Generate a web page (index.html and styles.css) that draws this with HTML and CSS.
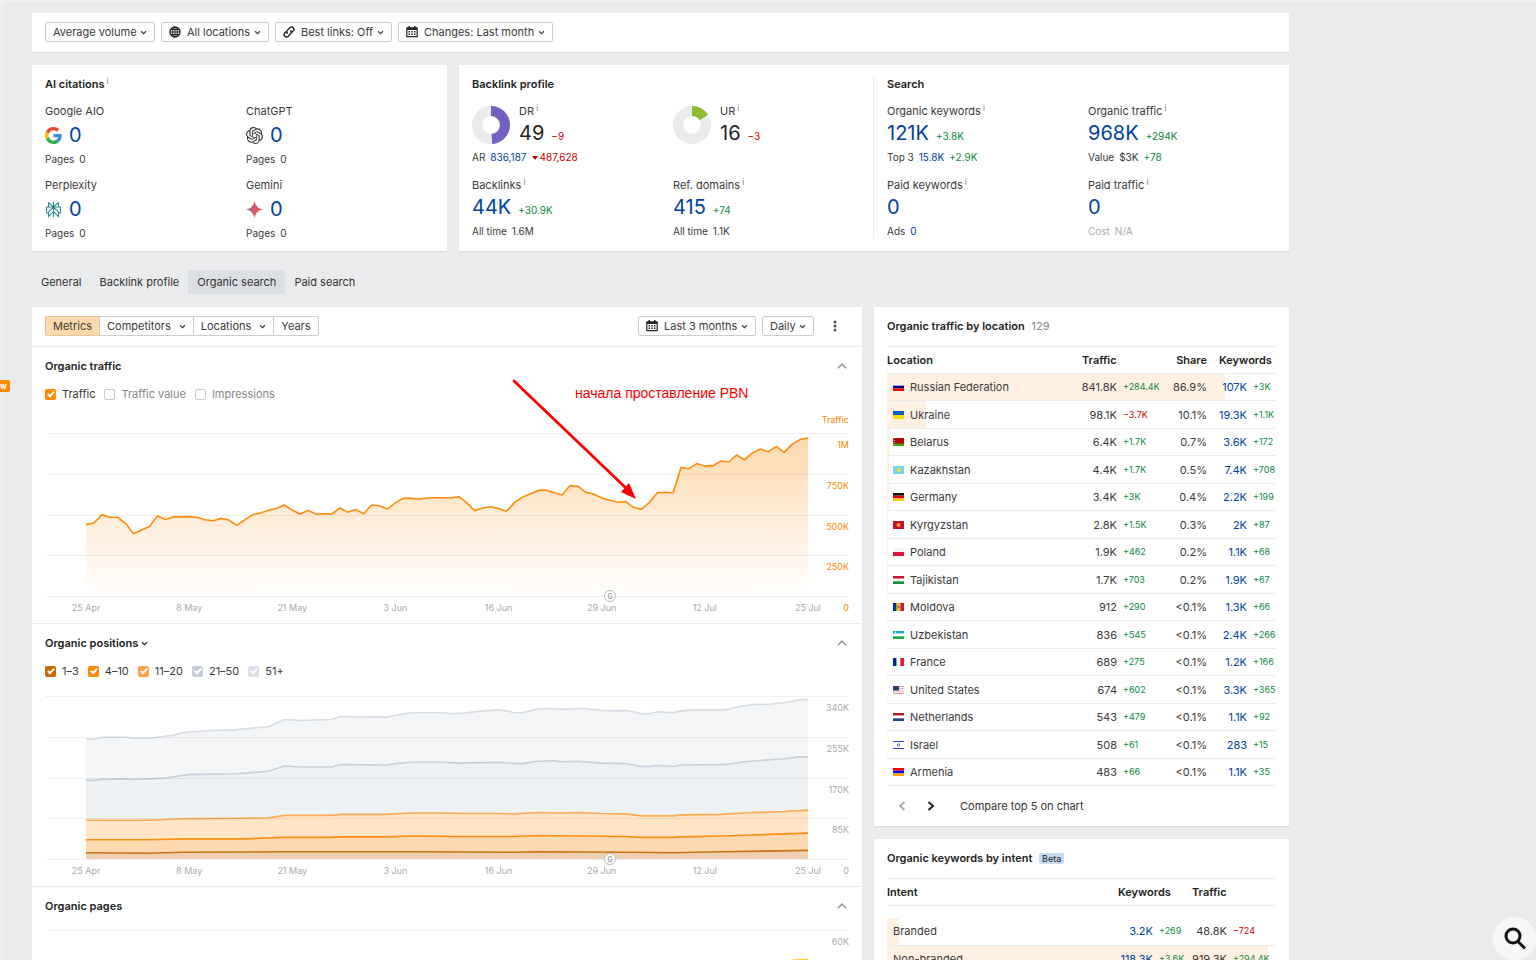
FILE: index.html
```html
<!DOCTYPE html>
<html lang="en">
<head>
    <meta charset="UTF-8">
    <meta name="viewport" content="width=device-width, initial-scale=1.0">
    <title>Site overview</title>
    <link rel="stylesheet" href="styles.css">
</head>
<body>

    <!-- Shared icons -->
    <svg class="sprite" aria-hidden="true">
        <symbol id="chevron" viewBox="0 0 8 8"><path d="M1.2 2.600 4 5.400l2.800-2.800" fill="none" stroke="currentColor" stroke-width="1.300"/></symbol>
        <symbol id="collapse" viewBox="0 0 10 6"><path d="M.8 5.3 5 1.2l4.200 4.100" fill="none" stroke="currentColor" stroke-width="1.6"/></symbol>
        <symbol id="calendar" viewBox="0 0 12 12">
            <path fill="currentColor" fill-rule="evenodd" d="M2.500 0h1.500v1.300h4V0h1.500v1.300H11c.5 0 .8.300.8.800v8.400c0 .5-.300.800-.8.800H1c-.5 0-.8-.300-.8-.8V2.100c0-.5.300-.8.8-.8h1.500zM1.400 4v6.100h9.200V4z"/>
            <path fill="currentColor" d="M2.500 5H4v1.500H2.500zM5.200 5h1.500v1.500H5.200zM8 5h1.500v1.500H8zM2.500 7.600H4v1.500H2.500zM5.200 7.600h1.500v1.500H5.200zM8 7.600h1.500v1.500H8z"/>
        </symbol>
    </svg>

    <span class="new-badge">w</span>

    <div class="page">

        <!-- Filters -->
        <div class="card filters">
            <label class="picker">
                <select aria-label="Volume"><option>Average volume</option></select>
                <svg class="chevron"><use href="#chevron"/></svg>
            </label>
            <label class="picker">
                <svg class="icon" viewBox="0 0 12 12" fill="none" stroke="currentColor"><circle cx="6" cy="6" r="5" stroke-width="1.4"/><ellipse cx="6" cy="6" rx="2.300" ry="5"/><path d="M6 1v10M1 6h10M1.800 3.500h8.400M1.800 8.500h8.400"/></svg>
                <select aria-label="Location"><option>All locations</option></select>
                <svg class="chevron"><use href="#chevron"/></svg>
            </label>
            <label class="picker">
                <svg class="icon" viewBox="0 0 12 12" fill="none" stroke="currentColor" stroke-width="1.400" stroke-linecap="round"><path d="M4.300 7.300C3.300 6 3.700 5 4.500 4.200l2.300-2.400c1-1 2.500-1 3.400-.1s.9 2.300 0 3.300L9 6.200"/><path d="M7.700 4.700c1 1.300.6 2.300-.2 3.100l-2.300 2.400c-1 1-2.500 1-3.400.1s-.9-2.300 0-3.300L3 5.800"/></svg>
                <select aria-label="Best links"><option>Best links: Off</option></select>
                <svg class="chevron"><use href="#chevron"/></svg>
            </label>
            <label class="picker">
                <svg class="icon"><use href="#calendar"/></svg>
                <select aria-label="Changes"><option>Changes: Last month</option></select>
                <svg class="chevron"><use href="#chevron"/></svg>
            </label>
        </div>

        <!-- Overview cards -->
        <div class="overview">
            <section class="card panel">
                <h2>AI citations <sup>i</sup></h2>
                <div class="metrics ai">
                    <div class="metric">
                        <div class="label">Google AIO</div>
                        <div class="value">
                            <svg class="logo" viewBox="0 0 48 48"><path fill="#ea4335" d="M24 9.500c3.540 0 6.710 1.220 9.210 3.600l6.850-6.850C35.900 2.380 30.470 0 24 0 14.620 0 6.510 5.380 2.560 13.220l7.980 6.190C12.430 13.720 17.740 9.500 24 9.500z"/><path fill="#4285f4" d="M46.980 24.550c0-1.570-.15-3.090-.38-4.550H24v9.020h12.940c-.58 2.960-2.260 5.480-4.780 7.180l7.730 6c4.510-4.180 7.090-10.360 7.090-17.650z"/><path fill="#fbbc05" d="M10.530 28.590c-.48-1.450-.76-2.990-.76-4.590s.27-3.140.76-4.590l-7.980-6.190C.92 16.460 0 20.120 0 24c0 3.880.92 7.540 2.560 10.780l7.970-6.190z"/><path fill="#34a853" d="M24 48c6.480 0 11.930-2.130 15.890-5.810l-7.730-6c-2.150 1.450-4.920 2.300-8.160 2.300-6.260 0-11.570-4.220-13.470-9.910l-7.980 6.190C6.510 42.620 14.620 48 24 48z"/></svg>
                            <a href="#">0</a>
                        </div>
                        <div class="sub">Pages <span>0</span></div>
                    </div>
                    <div class="metric">
                        <div class="label">ChatGPT</div>
                        <div class="value">
                            <svg class="logo" viewBox="0 0 24 24"><path fill="#333" d="M22.2819 9.8211a5.9847 5.9847 0 0 0-.5157-4.9108 6.0462 6.0462 0 0 0-6.5098-2.9A6.0651 6.0651 0 0 0 4.9807 4.1818a5.9847 5.9847 0 0 0-3.9977 2.9 6.0462 6.0462 0 0 0 .7427 7.0966 5.98 5.98 0 0 0 .511 4.9107 6.051 6.051 0 0 0 6.5146 2.9001A5.9847 5.9847 0 0 0 13.2599 24a6.0557 6.0557 0 0 0 5.7718-4.2058 5.9894 5.9894 0 0 0 3.9977-2.9001 6.0557 6.0557 0 0 0-.7475-7.0729zm-9.022 12.6081a4.4755 4.4755 0 0 1-2.8764-1.0408l.1419-.0804 4.7783-2.7582a.7948.7948 0 0 0 .3927-.6813v-6.7369l2.02 1.1686a.071.071 0 0 1 .038.052v5.5826a4.504 4.504 0 0 1-4.4945 4.4944zm-9.6607-4.1254a4.4708 4.4708 0 0 1-.5346-3.0137l.142.0852 4.783 2.7582a.7712.7712 0 0 0 .7806 0l5.8428-3.3685v2.3324a.0804.0804 0 0 1-.0332.0615L9.74 19.9502a4.4992 4.4992 0 0 1-6.1408-1.6464zM2.3408 7.8956a4.485 4.485 0 0 1 2.3655-1.9728V11.6a.7664.7664 0 0 0 .3879.6765l5.8144 3.3543-2.0201 1.1685a.0757.0757 0 0 1-.071 0l-4.8303-2.7865A4.504 4.504 0 0 1 2.3408 7.872zm16.5963 3.8558L13.1038 8.364 15.1192 7.2a.0757.0757 0 0 1 .071 0l4.8303 2.7913a4.4944 4.4944 0 0 1-.6765 8.1042v-5.6772a.79.79 0 0 0-.407-.667zm2.0107-3.0231l-.142-.0852-4.7735-2.7818a.7759.7759 0 0 0-.7854 0L9.409 9.2297V6.8974a.0662.0662 0 0 1 .0284-.0615l4.8303-2.7866a4.4992 4.4992 0 0 1 6.6802 4.66zM8.3065 12.863l-2.02-1.1638a.0804.0804 0 0 1-.038-.0567V6.0742a4.4992 4.4992 0 0 1 7.3757-3.4537l-.142.0805L8.704 5.459a.7948.7948 0 0 0-.3927.6813zm1.0976-2.3654l2.602-1.4998 2.6069 1.4998v2.9994l-2.5974 1.4997-2.6067-1.4997Z"/></svg>
                            <a href="#">0</a>
                        </div>
                        <div class="sub">Pages <span>0</span></div>
                    </div>
                    <div class="metric">
                        <div class="label">Perplexity</div>
                        <div class="value">
                            <svg class="logo" viewBox="0 0 24 24" fill="none" stroke="#2a8790" stroke-width="1.500"><path d="M12 1v22M5 2l7 6.500V15l-7 7v-6.500l7-7M19 2l-7 6.500V15l7 7v-6.500l-7-7M5 2v6.500M19 2v6.500M5 17H2.200V8.500h19.600V17H19"/></svg>
                            <a href="#">0</a>
                        </div>
                        <div class="sub">Pages <span>0</span></div>
                    </div>
                    <div class="metric">
                        <div class="label">Gemini</div>
                        <div class="value">
                            <svg class="logo" viewBox="0 0 24 24"><defs><linearGradient id="gem"><stop offset="0" stop-color="#8f6fc4"/><stop offset=".5" stop-color="#d85a66"/><stop offset="1" stop-color="#e0694f"/></linearGradient></defs><path fill="url(#gem)" d="M12 0c1.500 7 5 10.500 12 12-7 1.500-10.500 5-12 12-1.500-7-5-10.500-12-12C7 10.500 10.500 7 12 0z"/></svg>
                            <a href="#">0</a>
                        </div>
                        <div class="sub">Pages <span>0</span></div>
                    </div>
                </div>
            </section>

            <div class="card split">
                <section class="panel">
                    <h2>Backlink profile</h2>
                    <div class="metrics">
                        <div class="metric">
                            <div class="rating">
                                <svg class="donut" viewBox="0 0 38 38"><circle cx="19" cy="19" r="14"/><circle class="arc dr" cx="19" cy="19" r="14" pathLength="100" stroke-dasharray="49 100"/></svg>
                                <div>
                                    <div class="label">DR <sup>i</sup></div>
                                    <div class="value dark">49 <span class="delta down">−9</span></div>
                                </div>
                            </div>
                            <div class="sub">AR <a href="#">836,187</a> <span class="down rank">487,628</span></div>
                        </div>
                        <div class="metric">
                            <div class="rating">
                                <svg class="donut" viewBox="0 0 38 38"><circle cx="19" cy="19" r="14"/><circle class="arc ur" cx="19" cy="19" r="14" pathLength="100" stroke-dasharray="16 100"/></svg>
                                <div>
                                    <div class="label">UR <sup>i</sup></div>
                                    <div class="value dark">16 <span class="delta down">−3</span></div>
                                </div>
                            </div>
                        </div>
                        <div class="metric">
                            <div class="label">Backlinks <sup>i</sup></div>
                            <div class="value"><a href="#">44K</a> <span class="delta">+30.9K</span></div>
                            <div class="sub">All time <span>1.6M</span></div>
                        </div>
                        <div class="metric">
                            <div class="label">Ref. domains <sup>i</sup></div>
                            <div class="value"><a href="#">415</a> <span class="delta">+74</span></div>
                            <div class="sub">All time <span>1.1K</span></div>
                        </div>
                    </div>
                </section>
                <section class="panel">
                    <h2>Search</h2>
                    <div class="metrics">
                        <div class="metric">
                            <div class="label">Organic keywords <sup>i</sup></div>
                            <div class="value"><a href="#">121K</a> <span class="delta">+3.8K</span></div>
                            <div class="sub">Top 3 <a href="#">15.8K</a> <span class="delta">+2.9K</span></div>
                        </div>
                        <div class="metric">
                            <div class="label">Organic traffic <sup>i</sup></div>
                            <div class="value"><a href="#">968K</a> <span class="delta">+294K</span></div>
                            <div class="sub">Value <span>$3K</span> <span class="delta">+78</span></div>
                        </div>
                        <div class="metric">
                            <div class="label">Paid keywords <sup>i</sup></div>
                            <div class="value"><a href="#">0</a></div>
                            <div class="sub">Ads <a href="#">0</a></div>
                        </div>
                        <div class="metric">
                            <div class="label">Paid traffic <sup>i</sup></div>
                            <div class="value"><a href="#">0</a></div>
                            <div class="sub muted">Cost <span>N/A</span></div>
                        </div>
                    </div>
                </section>
            </div>
        </div>

        <nav class="tabs">
            <a href="#">General</a>
            <a href="#">Backlink profile</a>
            <a href="#" class="active">Organic search</a>
            <a href="#">Paid search</a>
        </nav>

        <div class="content">
            <!-- Charts -->
            <div class="card charts">
                <div class="toolbar">
                    <div class="segments">
                        <button class="active">Metrics</button>
                        <button>Competitors <svg class="chevron"><use href="#chevron"/></svg></button>
                        <button>Locations <svg class="chevron"><use href="#chevron"/></svg></button>
                        <button>Years</button>
                    </div>
                    <div class="range">
                        <label class="picker">
                            <svg class="icon"><use href="#calendar"/></svg>
                            <select aria-label="Period"><option>Last 3 months</option></select>
                            <svg class="chevron"><use href="#chevron"/></svg>
                        </label>
                        <label class="picker">
                            <select aria-label="Interval"><option>Daily</option></select>
                            <svg class="chevron"><use href="#chevron"/></svg>
                        </label>
                        <button class="kebab" aria-label="More"><svg viewBox="0 0 4 12"><circle cx="2" cy="2" r="1.500"/><circle cx="2" cy="6" r="1.500"/><circle cx="2" cy="10" r="1.500"/></svg></button>
                    </div>
                </div>

                <section class="chart">
                    <div class="chart-head">
                        <h2>Organic traffic</h2>
                        <button class="collapse" aria-label="Collapse"><svg><use href="#collapse"/></svg></button>
                    </div>
                    <div class="legend">
                        <label><input type="checkbox" checked> Traffic</label>
                        <label class="off"><input type="checkbox"> Traffic value</label>
                        <label class="off"><input type="checkbox"> Impressions</label>
                    </div>
                    <svg id="trafficChart" class="plot orange" viewBox="0 0 804 203"></svg>
                    <svg class="note-arrow" viewBox="0 0 126 122"><path d="M2 2 115 110" stroke="#f00" stroke-width="2.800" stroke-linecap="round"/><path d="M124 120 109 113l8-9z" fill="#f00"/></svg>
                    <span class="note-text" lang="ru">начала проставление PBN</span>
                </section>

                <section class="chart">
                    <div class="chart-head">
                        <h2><button class="heading-button">Organic positions <svg class="chevron"><use href="#chevron"/></svg></button></h2>
                        <button class="collapse" aria-label="Collapse"><svg><use href="#collapse"/></svg></button>
                    </div>
                    <div class="legend">
                        <label><input type="checkbox" class="p1" checked> 1–3</label>
                        <label><input type="checkbox" class="p2" checked> 4–10</label>
                        <label><input type="checkbox" class="p3" checked> 11–20</label>
                        <label><input type="checkbox" class="p4" checked> 21–50</label>
                        <label><input type="checkbox" class="p5" checked> 51+</label>
                    </div>
                    <svg id="positionsChart" class="plot" viewBox="0 0 804 189"></svg>
                </section>

                <section class="chart">
                    <div class="chart-head">
                        <h2>Organic pages</h2>
                        <button class="collapse" aria-label="Collapse"><svg><use href="#collapse"/></svg></button>
                    </div>
                    <svg class="plot" viewBox="0 0 804 189">
                        <path class="grid" d="M0 6.500h804"/>
                        <text class="tick" x="804" y="21" text-anchor="end">60K</text>
                        <path d="M747 36.500l16-1" fill="none" stroke="#fc3" stroke-width="2"/>
                    </svg>
                </section>
            </div>

            <div class="side">
                <!-- Traffic by location -->
                <section class="card table-card">
                    <h2>Organic traffic by location <span class="count">129</span></h2>
                    <table class="locations">
                        <colgroup><col><col class="c-traffic"><col class="c-delta"><col class="c-share"><col class="c-keywords"><col class="c-change"></colgroup>
                        <thead>
                            <tr><th>Location</th><th colspan="2" class="h-traffic">Traffic</th><th class="num">Share</th><th colspan="2" class="h-keywords">Keywords</th></tr>
                        </thead>
                        <tbody id="locationRows"></tbody>
                    </table>
                    <div class="pager">
                        <button aria-label="Previous" disabled><svg viewBox="0 0 8 10"><path d="M6.500 1 2 5l4.500 4"/></svg></button>
                        <button aria-label="Next"><svg viewBox="0 0 8 10"><path d="M1.500 1 6 5 1.500 9"/></svg></button>
                        <a href="#">Compare top 5 on chart</a>
                    </div>
                </section>

                <!-- Keywords by intent -->
                <section class="card table-card">
                    <h2>Organic keywords by intent <span class="beta">Beta</span></h2>
                    <table class="intents">
                        <colgroup><col><col class="i-keywords"><col class="i-change"><col class="i-traffic"><col class="i-delta"></colgroup>
                        <thead>
                            <tr><th>Intent</th><th colspan="2" class="h-intent">Keywords</th><th colspan="2" class="h-intent">Traffic</th></tr>
                        </thead>
                        <tbody>
                            <tr style="--bar: 3%"><td>Branded</td><td class="num"><a href="#">3.2K</a></td><td class="delta">+269</td><td class="num">48.8K</td><td class="delta down">−724</td></tr>
                            <tr style="--bar: 98%"><td>Non-branded</td><td class="num"><a href="#">118.3K</a></td><td class="delta">+3.6K</td><td class="num">919.3K</td><td class="delta">+294.4K</td></tr>
                        </tbody>
                    </table>
                </section>
            </div>
        </div>
    </div>

    <button class="search-button" aria-label="Search"><svg viewBox="0 0 24 24"><circle cx="10" cy="9" r="7"/><path d="m15 14.500 7 7"/></svg></button>

    <script src="script.js"></script>
</body>
</html>
```

FILE: styles.css
```css
* {
    box-sizing: border-box;
}
body {
    margin: 0;
    height: 100vh;
    overflow: hidden;
    border-top: 1px solid #f1f2f3;
    background-color: #eaebed;
    color: #3a3a3a;
    font-family: Inter, "Liberation Sans", sans-serif;
    font-size: 11px;
    line-height: 16px;
}
a {
    color: #00439e;
    text-decoration: none;
}
h2 {
    margin: 0;
    font-size: 11px;
    font-weight: 600;
    color: #222;
}
button, select, input {
    font: inherit;
    color: inherit;
    margin: 0;
}
button {
    padding: 0;
    border: none;
    background: none;
    cursor: pointer;
}
sup {
    font-size: 8px;
    font-weight: 400;
    line-height: 0;
    color: #777;
    vertical-align: 4px;
    margin-left: -1px;
}
.sprite {
    display: none;
}
.page {
    max-width: 1288px;
    margin-left: 1px;
    padding: 12px 0 0 30px;
    border-left: 1px solid #f4f4f5;
}
.card {
    background-color: #fff;
    box-shadow: 0 1px 1px rgba(0, 0, 0, 0.07);
}
.new-badge {
    position: absolute;
    left: 0;
    top: 380px;
    width: 10px;
    height: 12px;
    line-height: 12px;
    font-size: 8px;
    font-weight: 700;
    color: #fff;
    background-color: #ff8800;
    border-radius: 0 2px 2px 0;
}

/* Filters */
.filters {
    display: flex;
    gap: 6px;
    padding: 9px 13px 10px;
}
.picker {
    display: flex;
    align-items: center;
    height: 20px;
    padding: 0 7px;
    border: 1px solid #ccc;
    border-radius: 2px;
    background-color: #fff;
}
.picker select {
    appearance: none;
    border: none;
    padding: 0;
    background: none;
    outline: none;
}
.chevron {
    width: 7px;
    height: 7px;
    margin-left: 3px;
}
.icon {
    width: 12px;
    height: 12px;
    margin-right: 6px;
    color: #222;
}

/* Overview */
.overview {
    display: grid;
    grid-template-columns: 1fr 2fr;
    gap: 12px;
    margin-top: 13px;
}
.split {
    display: grid;
    grid-template-columns: 1fr 1fr;
}
.panel {
    padding: 11px 13px 10px;
    position: relative;
}
.split .panel + .panel::before {
    content: "";
    position: absolute;
    left: -1px;
    top: 12px;
    bottom: 12px;
    width: 1px;
    background-color: #eaebed;
}
.metrics {
    display: grid;
    grid-template-columns: 1fr 1fr;
    grid-auto-rows: 64px;
    gap: 10px 13px;
    margin-top: 11px;
}
.value {
    display: flex;
    align-items: baseline;
    gap: 7px;
    height: 28px;
    line-height: 29px;
    font-size: 20px;
}
.dark {
    color: #222;
}
.ai .value {
    align-items: center;
    margin-top: 2px;
}
.logo {
    width: 17px;
    height: 17px;
}
.sub {
    display: flex;
    align-items: center;
    gap: 5px;
    margin-top: 2px;
    font-size: 10px;
}
.delta {
    font-size: 10px;
    color: #0a8a3e;
}
.down {
    color: #cc0000;
}
.muted {
    color: #aaa;
}
.rank::before {
    content: "";
    display: inline-block;
    border: 3px solid transparent;
    border-top: 4px solid #cc0000;
    border-bottom: 0;
    margin-right: 2px;
    vertical-align: 1px;
}
.rating {
    display: flex;
    align-items: center;
    gap: 9px;
}
.donut {
    width: 38px;
    height: 38px;
}
.donut circle {
    fill: none;
    stroke: #eaebed;
    stroke-width: 10;
}
.donut .arc {
    transform: rotate(-90deg);
    transform-origin: center;
}
.donut .dr {
    stroke: #7460c0;
}
.donut .ur {
    stroke: #8fbc35;
}

/* Tabs */
.tabs {
    display: flex;
    margin: 19px 0 13px;
}
.tabs a {
    height: 24px;
    line-height: 24px;
    padding: 0 9px;
    color: #333;
    border-radius: 2px;
}
.tabs .active {
    background-color: #dbdfe5;
}

/* Charts */
.content {
    display: grid;
    grid-template-columns: 2fr 1fr;
    align-items: start;
    gap: 12px;
}
.toolbar {
    display: flex;
    justify-content: space-between;
    padding: 9px 13px 10px;
}
.segments, .range {
    display: flex;
}
.range {
    gap: 6px;
}
.segments button {
    display: flex;
    align-items: center;
    height: 20px;
    padding: 0 7px;
    border: 1px solid #ccc;
    border-left-width: 0;
}
.segments .chevron {
    margin-left: 8px;
}
.segments .active {
    background-color: #ffd9ae;
    border: 1px solid #e8c59d;
    border-radius: 2px 0 0 2px;
}
.segments button:last-child {
    border-radius: 0 2px 2px 0;
}
.kebab {
    width: 29px;
}
.kebab svg {
    width: 4px;
    height: 12px;
    fill: #555;
    display: block;
    margin: auto;
}
.chart {
    position: relative;
    padding: 11px 13px 8px;
    border-top: 1px solid #eaebed;
}
.chart-head {
    display: flex;
    justify-content: space-between;
    align-items: center;
    height: 16px;
}
.heading-button {
    display: flex;
    align-items: center;
    font-weight: 600;
}
.collapse {
    width: 14px;
    height: 16px;
    color: #999;
}
.collapse svg {
    width: 10px;
    height: 6px;
    display: block;
    margin: auto;
}
.legend {
    display: flex;
    gap: 9px;
    margin-top: 12px;
}
.legend label {
    display: flex;
    align-items: center;
    gap: 6px;
}
.legend .off {
    color: #888;
}
.legend input {
    appearance: none;
    width: 11px;
    height: 11px;
    border: 1px solid #ccc;
    border-radius: 2px;
    position: relative;
}
.legend input:checked {
    border: none;
    background-color: #ff8800;
}
.legend input:checked::after {
    content: "";
    position: absolute;
    left: 4px;
    top: 1px;
    box-sizing: border-box;
    width: 4px;
    height: 7px;
    border: solid #fff;
    border-width: 0 2px 2px 0;
    transform: rotate(45deg);
}
.legend .p1:checked {
    background-color: #cc6600;
}
.legend .p3:checked {
    background-color: #ffa142;
}
.legend .p4:checked {
    background-color: #c6ced9;
}
.legend .p5:checked {
    background-color: #dae0e8;
}
.plot {
    display: block;
    width: 100%;
    margin-top: 10px;
}
.grid {
    stroke: #000;
    stroke-opacity: 0.06;
    fill: none;
}
.tick {
    font-size: 9px;
    fill: #aaa;
}
.orange .axis {
    fill: #ff8800;
}
.note-arrow {
    position: absolute;
    left: 480px;
    top: 32px;
    width: 126px;
    height: 122px;
}
.note-text {
    position: absolute;
    left: 543px;
    top: 38px;
    font-family: "Liberation Sans", Arial, sans-serif;
    font-size: 14px;
    color: #f00;
}

/* Tables */
.side {
    display: grid;
    gap: 13px;
}
.table-card {
    padding: 11px 13px 6px;
}
.count {
    margin-left: 4px;
    font-weight: 400;
    color: #888;
}
.beta {
    margin-left: 4px;
    padding: 0 3px;
    font-size: 9px;
    line-height: 11px;
    display: inline-block;
    font-weight: 400;
    border-radius: 2px;
    background-color: #c5dbf3;
}
table {
    width: 100%;
    margin-top: 12px;
    table-layout: fixed;
    border-collapse: collapse;
    border-top: 1px solid #eaebed;
}
th, td {
    padding: 0;
    height: 27px;
    text-align: left;
    white-space: nowrap;
    border-bottom: 1px solid #eaebed;
}
th {
    font-weight: 600;
    color: #222;
}
tbody tr {
    background: linear-gradient(#fff1e2, #fff1e2) no-repeat 0 0 / var(--bar) 100%;
}
td:first-child {
    padding-left: 6px;
}
.locations tbody tr:nth-child(even) td {
    height: 28px;
}
.num {
    text-align: right;
}
td.delta {
    padding-left: 6px;
    font-size: 9px;
}
.c-traffic { width: 51px; }
.c-delta { width: 46px; }
.c-share { width: 44px; }
.c-keywords { width: 40px; }
.c-change { width: 29px; }
.h-traffic { padding-left: 16px; }
.h-keywords { padding-left: 12px; }
.flag {
    width: 11px;
    height: 8px;
    margin-right: 6px;
    vertical-align: 0;
}
.pager {
    display: flex;
    align-items: center;
    height: 29px;
    margin-top: 5px;
}
.pager button {
    width: 29px;
    height: 16px;
}
.pager svg {
    width: 8px;
    height: 10px;
    display: block;
    margin: auto;
    fill: none;
    stroke: #222;
    stroke-width: 2;
}
.pager button:disabled svg {
    stroke: #aaa;
}
.pager a {
    margin-left: 15px;
    color: #333;
}
.intents thead::after {
    content: "";
    display: block;
    height: 12px;
}
.i-keywords { width: 42px; }
.i-change { width: 32px; }
.i-traffic { width: 42px; }
.i-delta { width: 49px; }
.h-intent { padding-left: 7px; }

/* Floating search */
.search-button {
    position: fixed;
    right: 0;
    bottom: 0;
    width: 43px;
    height: 43px;
    border-radius: 50%;
    background-color: #f7f7f7;
}
.search-button svg {
    width: 24px;
    height: 24px;
    display: block;
    margin: auto;
    fill: none;
    stroke: #111;
    stroke-width: 3;
}
```

FILE: script.js
```js
// Daily organic traffic, thousands
const traffic = [
    438, 448, 499, 483, 483, 444, 382, 405, 427, 491, 470, 485, 485, 487, 483, 468, 462, 476, 466, 434,
    466, 499, 509, 526, 536, 558, 526, 503, 526, 501, 505, 503, 540, 515, 530, 505, 558, 554, 534, 573,
    599, 599, 595, 601, 603, 603, 601, 609, 571, 524, 540, 548, 536, 519, 573, 607, 626, 648, 650, 634,
    620, 677, 673, 636, 626, 601, 587, 575, 579, 544, 532, 573, 634, 636, 634, 789, 781, 812, 798, 798,
    828, 822, 865, 836, 877, 902, 885, 918, 881, 930, 961, 969
];

// Stacked keyword positions, [day, thousands], top band first
const positions = [
    { fill: '#f4f5f7', line: '#d5dce4', data: [[0, 250], [1, 250], [2, 254], [5, 254], [6, 252], [8, 252], [9, 254], [11, 258], [12, 263], [13, 265], [16, 268], [19, 270], [21, 273], [23, 276], [25, 291], [27, 289], [31, 291], [32, 297], [36, 296], [38, 296], [39, 300], [41, 305], [45, 305], [46, 303], [48, 305], [50, 309], [52, 311], [53, 309], [54, 305], [55, 305], [57, 313], [59, 314], [60, 312], [62, 314], [63, 314], [65, 310], [67, 309], [68, 310], [69, 307], [70, 303], [71, 303], [72, 307], [74, 305], [75, 309], [77, 311], [80, 311], [81, 312], [82, 317], [84, 322], [86, 323], [88, 326], [90, 332], [91, 333]] },
    { fill: '#edf1f4', line: '#c6cfd9', data: [[0, 164], [1, 164], [2, 166], [5, 167], [6, 166], [8, 167], [10, 169], [12, 174], [13, 176], [19, 178], [23, 183], [25, 194], [27, 192], [31, 192], [32, 197], [38, 196], [39, 199], [41, 202], [45, 202], [47, 200], [52, 202], [54, 199], [55, 199], [57, 204], [59, 205], [60, 203], [62, 204], [65, 200], [68, 199], [70, 193], [71, 193], [72, 195], [74, 193], [75, 196], [80, 197], [81, 198], [83, 203], [88, 209], [90, 213], [91, 213]] },
    { fill: '#ffe4c8', line: '#ffa950', data: [[0, 81], [8, 81], [12, 84], [19, 85], [23, 86], [25, 91], [31, 91], [32, 93], [38, 93], [41, 96], [45, 96], [48, 95], [52, 95], [54, 94], [57, 97], [60, 96], [62, 97], [65, 95], [68, 94], [70, 90], [74, 90], [75, 92], [80, 93], [84, 97], [88, 99], [91, 102]] },
    { fill: '#ffd9b0', line: '#ff8f10', data: [[0, 40], [8, 40], [12, 42], [20, 42], [25, 45], [31, 45], [32, 46], [38, 46], [41, 48], [47, 47], [54, 47], [57, 49], [68, 47], [70, 45], [74, 45], [75, 46], [80, 48], [84, 50], [91, 54]] },
    { fill: '#eed0b0', line: '#d0700f', data: [[0, 13], [8, 12], [12, 14], [25, 15], [41, 15], [54, 14], [57, 15], [68, 14], [74, 13], [80, 15], [91, 18]] }
];

const dates = ['25 Apr', '8 May', '21 May', '3 Jun', '16 Jun', '29 Jun', '12 Jul', '25 Jul'];

const plotLeft = 41;
const plotWidth = 722;
const plotHeight = 163;

function dayX(day) {
    return plotLeft + day * plotWidth / 91;
}

function toPoints(data, top, max) {
    return data.map(([day, v]) => dayX(day).toFixed(1) + ',' + (top + plotHeight * (1 - v / max)).toFixed(1)).join(' ');
}

function area(points, bottom, fill) {
    return `<polygon points="${plotLeft},${bottom} ${points} ${plotLeft + plotWidth},${bottom}" fill="${fill}"/>`;
}

function line(points, color) {
    return `<polyline points="${points}" fill="none" stroke="${color}" stroke-width="1.6"/>`;
}

function gridAndAxes(top, labels) {
    let out = '';
    labels.forEach((label, i) => {
        const y = top + Math.round(i * plotHeight / 4);
        out += `<path class="grid" d="M0 ${y + 0.5}h804"/>`;
        out += `<text class="tick axis" x="804" y="${y + 15}" text-anchor="end">${label}</text>`;
    });
    dates.forEach((label, i) => {
        out += `<text class="tick" x="${dayX(i * 13)}" y="${top + plotHeight + 15}" text-anchor="middle">${label}</text>`;
    });
    // Google update marker
    const y = top + plotHeight;
    out += `<circle cx="565" cy="${y}" r="5.5" fill="#fff" stroke="#bbb"/>`;
    out += `<text x="565" y="${y + 3}" text-anchor="middle" font-size="7" font-weight="600" fill="#999">G</text>`;
    return out;
}

function drawTraffic() {
    const top = 21;
    const points = toPoints(traffic.map((v, i) => [i, v]), top, 1000);
    document.getElementById('trafficChart').innerHTML =
        '<defs><linearGradient id="fade" x1="0" y1="0" x2="0" y2="1"><stop offset="0" stop-color="#ffd8ae"/><stop offset="1" stop-color="#fff"/></linearGradient></defs>' +
        area(points, top + plotHeight, 'url(#fade)') + line(points, '#ff8c0a') +
        '<text class="tick axis" x="804" y="11" text-anchor="end">Traffic</text>' +
        gridAndAxes(top, ['1M', '750K', '500K', '250K', '0']);
}

function drawPositions() {
    const top = 7;
    let out = '';
    positions.forEach(band => {
        const points = toPoints(band.data, top, 340);
        out += area(points, top + plotHeight, band.fill) + line(points, band.line);
    });
    document.getElementById('positionsChart').innerHTML = out + gridAndAxes(top, ['340K', '255K', '170K', '85K', '0']);
}

// Flags are 11 x 8
function bands(...colors) {
    const h = 8 / colors.length;
    return colors.map((c, i) => `<rect y="${i * h}" width="11" height="${h}" fill="${c}"/>`).join('');
}
function stripes(...colors) {
    const w = 11 / colors.length;
    return colors.map((c, i) => `<rect x="${i * w}" width="${w}" height="8" fill="${c}"/>`).join('');
}

const flags = {
    ru: bands('#f4f4f4', '#00008b', '#f00'),
    ua: bands('#0a5fc4', '#ffd900'),
    by: '<rect width="11" height="8" fill="#b40a0a"/><rect y="5.500" width="11" height="2.500" fill="#4a9e0a"/><path d="M1 0v8" stroke="#e9b0b0" stroke-dasharray="1 1"/>',
    kz: '<rect width="11" height="8" fill="#6fd6ec"/><circle cx="6" cy="4" r="2" fill="#f2e23a"/>',
    de: bands('#111', '#e00', '#fc0'),
    kg: '<rect width="11" height="8" fill="#c4102c"/><circle cx="5.500" cy="4" r="2" fill="#e8a21c"/>',
    pl: bands('#f4f4f4', '#dc143c'),
    tj: bands('#c8102e', '#fff', '#1a8f3a') + '<circle cx="5.5" cy="4" r=".8" fill="#f2d23a"/>',
    md: stripes('#0b2f9a', '#f5cf1a', '#d5152b') + '<rect x="4.500" y="2.500" width="2" height="3" fill="#a5703a"/>',
    uz: bands('#18a5c5', '#fff', '#22a845') + '<circle cx="2.500" cy="1.300" r=".8" fill="#fff"/>',
    fr: stripes('#00267f', '#fff', '#f31830'),
    us: bands('#e29aa2', '#fff', '#e29aa2', '#fff', '#e29aa2', '#fff', '#e29aa2') + '<rect width="6" height="4.500" fill="#2e3f70"/>',
    nl: bands('#ae1c28', '#fff', '#21468b'),
    il: '<rect width="11" height="8" fill="#fff"/><path d="M0 .5h11M0 7.5h11" stroke="#3a3ae0"/><circle cx="5.5" cy="4" r="1.200" fill="none" stroke="#3a3ae0" stroke-width=".8"/>',
    am: bands('#f00', '#00f', '#ffa500')
};

const locations = [
    ['ru', 'Russian Federation', '841.8K', '+284.4K', '86.9%', '107K', '+3K'],
    ['ua', 'Ukraine', '98.1K', '−3.7K', '10.1%', '19.3K', '+1.1K'],
    ['by', 'Belarus', '6.4K', '+1.7K', '0.7%', '3.6K', '+172'],
    ['kz', 'Kazakhstan', '4.4K', '+1.7K', '0.5%', '7.4K', '+708'],
    ['de', 'Germany', '3.4K', '+3K', '0.4%', '2.2K', '+199'],
    ['kg', 'Kyrgyzstan', '2.8K', '+1.5K', '0.3%', '2K', '+87'],
    ['pl', 'Poland', '1.9K', '+462', '0.2%', '1.1K', '+68'],
    ['tj', 'Tajikistan', '1.7K', '+703', '0.2%', '1.9K', '+67'],
    ['md', 'Moldova', '912', '+290', '<0.1%', '1.3K', '+66'],
    ['uz', 'Uzbekistan', '836', '+545', '<0.1%', '2.4K', '+266'],
    ['fr', 'France', '689', '+275', '<0.1%', '1.2K', '+166'],
    ['us', 'United States', '674', '+602', '<0.1%', '3.3K', '+365'],
    ['nl', 'Netherlands', '543', '+479', '<0.1%', '1.1K', '+92'],
    ['il', 'Israel', '508', '+61', '<0.1%', '283', '+15'],
    ['am', 'Armenia', '483', '+66', '<0.1%', '1.1K', '+35']
];

function drawLocations() {
    document.getElementById('locationRows').innerHTML = locations.map(([code, name, visits, change, share, keywords, kwChange]) => {
        const down = change.startsWith('−') ? ' down' : '';
        return `<tr style="--bar: ${share.replace('<', '')}">
            <td><svg class="flag" viewBox="0 0 11 8" preserveAspectRatio="none">${flags[code]}</svg>${name}</td>
            <td class="num">${visits}</td><td class="delta${down}">${change}</td>
            <td class="num">${share.replace('<', '&lt;')}</td>
            <td class="num"><a href="#">${keywords}</a></td><td class="delta">${kwChange}</td>
        </tr>`;
    }).join('');
}

drawTraffic();
drawPositions();
drawLocations();
```
